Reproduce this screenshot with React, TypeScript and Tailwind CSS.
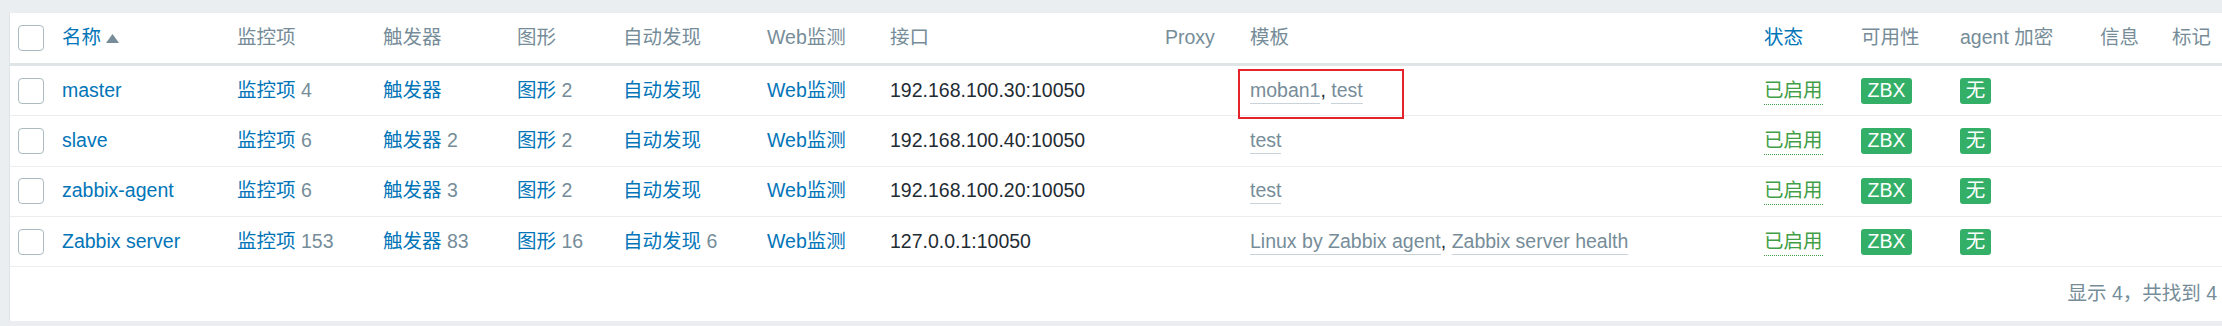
import React from 'react';

type Host = {
  name: string;
  items: number | null;
  triggers: number | null;
  graphs: number | null;
  discovery: number | null;
  iface: string;
  templates: string[];
};

const hosts: Host[] = [
  { name: 'master', items: 4, triggers: null, graphs: 2, discovery: null, iface: '192.168.100.30:10050', templates: ['moban1', 'test'] },
  { name: 'slave', items: 6, triggers: 2, graphs: 2, discovery: null, iface: '192.168.100.40:10050', templates: ['test'] },
  { name: 'zabbix-agent', items: 6, triggers: 3, graphs: 2, discovery: null, iface: '192.168.100.20:10050', templates: ['test'] },
  { name: 'Zabbix server', items: 153, triggers: 83, graphs: 16, discovery: 6, iface: '127.0.0.1:10050', templates: ['Linux by Zabbix agent', 'Zabbix server health'] },
];

const cols = {
  check: 'w-[52px] shrink-0 pl-[8px]',
  name: 'w-[175px] shrink-0',
  items: 'w-[146px] shrink-0',
  triggers: 'w-[134px] shrink-0',
  graphs: 'w-[106px] shrink-0',
  discovery: 'w-[144px] shrink-0',
  web: 'w-[123px] shrink-0',
  iface: 'w-[275px] shrink-0',
  proxy: 'w-[85px] shrink-0',
  templates: 'w-[514px] shrink-0',
  status: 'w-[97px] shrink-0',
  avail: 'w-[99px] shrink-0',
  enc: 'w-[140px] shrink-0',
  info: 'w-[72px] shrink-0',
  tags: 'flex-1',
};

function Checkbox() {
  return <div className="w-[26px] h-[26px] rounded-[4px] border border-[#acbbc2] bg-white" />;
}

function LinkCount({ label, count }: { label: string; count: number | null }) {
  return (
    <span>
      <span className="text-[#0275b8]">{label}</span>
      {count !== null && <span className="text-[#768d99]"> {count}</span>}
    </span>
  );
}

export default function App() {
  return (
    <div
      className="w-[2222px] h-[326px] bg-[#ebeef0] pt-[13px] pl-[9px] pb-[5px] overflow-hidden"
      style={{ fontFamily: '"Liberation Sans", Arial, "Noto Sans CJK SC", sans-serif' }}
    >
      <div className="h-full bg-white border-l border-[#dfe4e7] text-[19.5px] leading-none flex flex-col">
        {/* header */}
        <div className="flex items-center h-[53px] border-b-[3px] border-[#dfe4e7] text-[#768d99] shrink-0">
          <div className={cols.check}><Checkbox /></div>
          <div className={cols.name + ' flex items-center text-[#0275b8]'}>
            名称
            <svg width="13" height="9" viewBox="0 0 13 9" className="ml-[5px]">
              <path d="M6.5 0 L13 9 L0 9 Z" fill="#768d99" />
            </svg>
          </div>
          <div className={cols.items}>监控项</div>
          <div className={cols.triggers}>触发器</div>
          <div className={cols.graphs}>图形</div>
          <div className={cols.discovery}>自动发现</div>
          <div className={cols.web}>Web监测</div>
          <div className={cols.iface}>接口</div>
          <div className={cols.proxy}>Proxy</div>
          <div className={cols.templates}>模板</div>
          <div className={cols.status + ' text-[#0275b8]'}>状态</div>
          <div className={cols.avail}>可用性</div>
          <div className={cols.enc}>agent 加密</div>
          <div className={cols.info}>信息</div>
          <div className={cols.tags}>标记</div>
        </div>

        {/* rows */}
        {hosts.map((h, i) => (
          <div key={h.name} className="relative flex items-center h-[50.3px] border-b border-[#ebeef0] shrink-0">
            <div className={cols.check}><Checkbox /></div>
            <div className={cols.name + ' text-[#0275b8]'}>{h.name}</div>
            <div className={cols.items}><LinkCount label="监控项" count={h.items} /></div>
            <div className={cols.triggers}><LinkCount label="触发器" count={h.triggers} /></div>
            <div className={cols.graphs}><LinkCount label="图形" count={h.graphs} /></div>
            <div className={cols.discovery}><LinkCount label="自动发现" count={h.discovery} /></div>
            <div className={cols.web + ' text-[#0275b8]'}>Web监测</div>
            <div className={cols.iface + ' text-[#1f2c33]'}>{h.iface}</div>
            <div className={cols.proxy} />
            <div className={cols.templates + ' text-[#768d99]'}>
              {h.templates.map((t, j) => (
                <React.Fragment key={t}>
                  {j > 0 && <span className="text-[#1f2c33]">, </span>}
                  <span className="border-b border-[#c9d3d9] pb-[2px]">{t}</span>
                </React.Fragment>
              ))}
            </div>
            <div className={cols.status}>
              <span className="text-[#429e47] border-b border-dotted border-[#429e47] pb-[3px]">已启用</span>
            </div>
            <div className={cols.avail}>
              <span className="inline-flex items-center justify-center w-[51px] h-[26px] rounded-[3px] bg-[#34af67] text-white">ZBX</span>
            </div>
            <div className={cols.enc}>
              <span className="inline-flex items-center justify-center w-[31px] h-[26px] rounded-[3px] bg-[#34af67] text-white">无</span>
            </div>
            <div className={cols.info} />
            <div className={cols.tags} />
            {i === 0 && (
              <div className="absolute left-[1228px] top-[3px] w-[166px] h-[50px] border-2 border-[#e5232b] pointer-events-none" />
            )}
          </div>
        ))}

        {/* footer */}
        <div className="flex-1 flex items-center justify-end pr-[5px] text-[#768d99]">
          显示 4，共找到 4
        </div>
      </div>
    </div>
  );
}
